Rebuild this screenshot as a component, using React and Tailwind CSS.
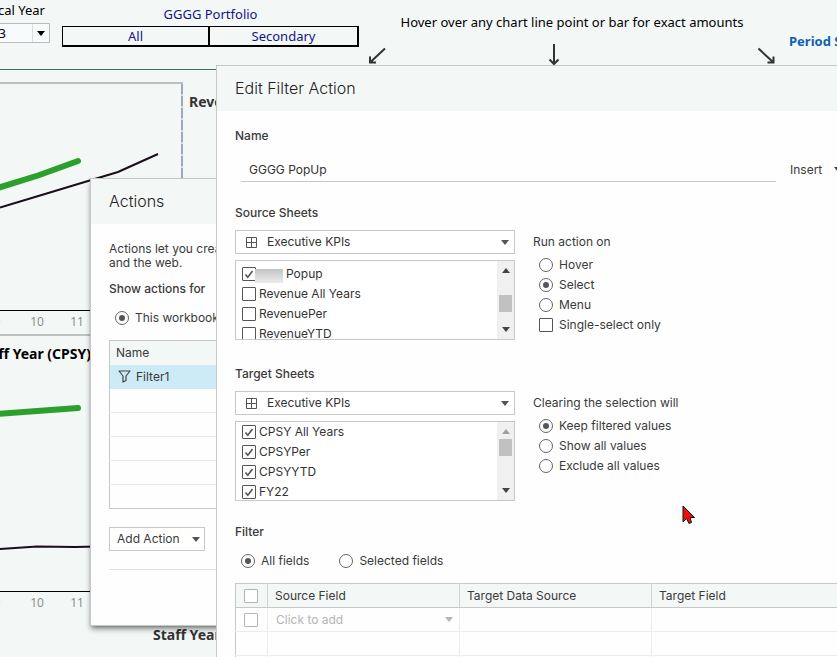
import React from "react";

const Caret = ({ className = "" }) => (
  <svg viewBox="0 0 8 5" className={"h-[5px] w-2 shrink-0 " + className} fill="currentColor" aria-hidden="true">
    <path d="M0 0h8L4 5z" />
  </svg>
);

const SheetIcon = () => (
  <svg viewBox="0 0 11 11" className="h-[11px] w-[11px]" fill="none" stroke="#555" aria-hidden="true">
    <path d="M.5.5h10v10H.5zM5.5.5v10M.5 5.5h10" />
  </svg>
);

function Radio({ label, name, checked }) {
  return (
    <label className="flex h-5 items-center gap-1.5 whitespace-nowrap">
      <input
        type="radio"
        name={name}
        defaultChecked={checked}
        className="grid h-3.5 w-3.5 shrink-0 appearance-none place-content-center rounded-full border border-[#666] bg-white before:h-1.5 before:w-1.5 before:rounded-full checked:before:bg-[#555]"
      />
      {label}
    </label>
  );
}

function Check({ label, checked, hidden, faint, gap = "gap-[3px]" }) {
  return (
    <label className={"flex h-5 items-center whitespace-nowrap " + gap}>
      <span className="relative block h-3.5 w-3.5 shrink-0">
        <input
          type="checkbox"
          defaultChecked={checked}
          aria-label={label || "Select row"}
          className={
            "peer block h-3.5 w-3.5 appearance-none rounded-[1px] border bg-white " +
            (faint ? "border-[#b4b4b4]" : "border-[#555]")
          }
        />
        <svg
          viewBox="0 0 14 14"
          className="pointer-events-none absolute inset-0 hidden h-3.5 w-3.5 peer-checked:block"
          fill="none"
          stroke="#555"
          strokeWidth="1.6"
          aria-hidden="true"
        >
          <path d="M3.5 7.5l2.3 2.8L10.5 4" />
        </svg>
      </span>
      {hidden && (
        <span className="-ml-1 h-3.5 w-7 translate-y-0.5 bg-linear-to-b from-[#c2c2c2] to-[#ededed]" />
      )}
      {label}
    </label>
  );
}

function SheetPicker({ id, title, items, offset, thumb, atTop }) {
  return (
    <section className="w-[280px] shrink-0">
      <label htmlFor={id} className="block h-5 leading-[22px] font-medium">
        {title}
      </label>
      <div className="relative mt-2">
        <select
          id={id}
          className="block h-6 w-full appearance-none border border-[#c8c8c8] bg-white pl-[31px] text-[#333]"
        >
          <option>Executive KPIs</option>
        </select>
        <span className="pointer-events-none absolute inset-0 flex items-center justify-between pl-[11px] pr-1.5">
          <SheetIcon />
          <Caret className="text-[#555]" />
        </span>
      </div>
      <div className="mt-1.5 flex h-20 overflow-hidden border border-[#c8c8c8] bg-white">
        <div className={"flex-1 pl-1.5 text-[#333] " + offset}>
          {items.map((item) => (
            <Check key={item.label} {...item} />
          ))}
        </div>
        <div className="flex w-[17px] flex-col items-center justify-between bg-[#f0f0f0] py-[7px]">
          <Caret className={"rotate-180 " + (atTop ? "text-[#a0a0a0]" : "text-[#444]")} />
          <div className={"flex w-[13px] flex-1 flex-col " + thumb}>
            <div className="h-[17px] bg-[#c1c1c1]" />
          </div>
          <Caret className="text-[#444]" />
        </div>
      </div>
    </section>
  );
}

function Axis() {
  return (
    <div className="-ml-[23px] flex h-6 border-t border-black text-center font-['Open_Sans','Noto_Sans',sans-serif] text-xs leading-[22px] text-[#888]">
      {[9, 10, 11, 12, 13].map((n) => (
        <span key={n} className="w-10 shrink-0">
          {n}
        </span>
      ))}
    </div>
  );
}

function Dashboard() {
  return (
    <div className="font-['Noto_Sans','Open_Sans',sans-serif]">
      <header className="flex h-[70px] border-b border-[#3b7254] whitespace-nowrap">
        <div className="flex w-[50px] shrink-0 flex-col items-end">
          <label htmlFor="year" className="pr-[5px] text-[13px] leading-5">
            Fiscal Year
          </label>
          <div className="relative mt-[3px]">
            <select
              id="year"
              className="block h-5 w-20 appearance-none border border-[#bbb] bg-[#f7fbfb] pl-5 text-[13px] leading-4"
            >
              <option>23</option>
            </select>
            <span className="pointer-events-none absolute inset-y-px right-px flex w-[17px] items-center justify-center border-l border-[#ddd]">
              <Caret />
            </span>
          </div>
        </div>
        <div className="ml-3 w-[297px] shrink-0 pt-1 text-center text-[13px] text-[#14148a]">
          <div className="h-[22px] leading-5">GGGG Portfolio</div>
          <div className="grid h-[21px] grid-cols-2 divide-x-2 divide-black border border-r-2 border-b-2 border-black">
            <button type="button" className="leading-[18px]">All</button>
            <button type="button" className="leading-[18px]">Secondary</button>
          </div>
        </div>
        <div className="ml-[9px] w-[408px] shrink-0 pt-3 text-center">
          <p className="text-[13px] leading-5">Hover over any chart line point or bar for exact amounts</p>
          <div className="mt-3 flex">
            <svg viewBox="0 0 18 22" className="h-[22px] w-[18px]" fill="none" stroke="#333" strokeWidth="2" aria-hidden="true">
              <path d="M17 4.500L2 18.500M2 12.500V18.500h6" />
            </svg>
            <svg viewBox="0 0 18 22" className="ml-[159px] h-[22px] w-[18px]" fill="none" stroke="#333" strokeWidth="2" aria-hidden="true">
              <path d="M9 0v20M4.500 15.500L9 20l4.500-4.500" />
            </svg>
            <svg viewBox="0 0 18 22" className="ml-[195px] h-[22px] w-[18px]" fill="none" stroke="#333" strokeWidth="2" aria-hidden="true">
              <path d="M.5 4.500L15.500 18.500M15.500 12.500V18.500h-6" />
            </svg>
          </div>
        </div>
        <a href="#period" className="ml-[13px] pt-[31px] text-[13px] leading-5 font-bold text-[#0b62b5]">
          Period S
        </a>
      </header>

      <div className="mt-3 flex">
        <div className="w-[183px] shrink-0">
          <div className="flex border-y-2 border-[#bdc1c0]">
            <div className="flex-1">
              <svg viewBox="0 84 180 226" className="block h-[226px] w-[180px]" fill="none" aria-hidden="true">
                <path d="M-4 188.500L38 175.500L78 161" stroke="#2ca02c" strokeWidth="6" strokeLinecap="round" />
                <path d="M0 207.500L40 195.500L88 181L118 172L158 154" stroke="#1c0c1c" strokeWidth="2" />
              </svg>
              <Axis />
            </div>
            <div className="w-0.5 bg-[repeating-linear-gradient(#9aaabf_0_10px,#d5dadb_10px_12px)]" />
          </div>
        </div>
        <h2 className="pt-2.5 pl-1.5 text-sm leading-5 font-bold text-[#333]">Revenue</h2>
      </div>

      <div>
        <h2 className="flex h-[35px] w-[91px] items-center justify-end text-sm font-bold whitespace-nowrap">
          Staff Year (CPSY)
        </h2>
        <svg viewBox="0 371 180 220" className="block h-[220px] w-[180px]" fill="none" aria-hidden="true">
          <path d="M-4 414L78 408" stroke="#2ca02c" strokeWidth="6" strokeLinecap="round" />
          <path d="M0 549L37 546.500L75 547L120 546" stroke="#1c0c1c" strokeWidth="2" />
        </svg>
        <div className="w-[180px]">
          <Axis />
        </div>
      </div>
      <h2 className="mt-2.5 pl-[153px] text-sm leading-5 font-bold text-[#333]">Staff Year</h2>
    </div>
  );
}

function ActionsDialog() {
  return (
    <section className="absolute top-[178px] left-[90px] w-[600px] border border-[#c4c8c8] bg-[#fefefe] pb-[55px] shadow-md shadow-black/40">
      <h2 className="h-[45px] bg-[#f3f7f6] pl-[18px] text-base leading-[44px] font-light text-[#222]">Actions</h2>
      <div className="pt-[18px] pl-[18px]">
        <p className="leading-[14px]">
          Actions let you create
          <br />
          and the web.
        </p>
        <h3 className="mt-[9px] h-5 leading-5 font-medium">Show actions for</h3>
        <div className="mt-[9px] pl-1.5">
          <Radio name="scope" label="This workbook" checked />
        </div>
        <table className="mt-3 w-full border-collapse border border-[#c8c8c8] text-left">
          <thead>
            <tr className="h-6 bg-[#f3f7f6]">
              <th className="pl-1.5 font-normal">Name</th>
            </tr>
          </thead>
          <tbody>
            <tr className="h-6 bg-[#cdeaf7]">
              <td className="pl-2">
                <span className="flex items-center gap-[5px]">
                  <svg viewBox="0 0 13 13" className="h-[13px] w-[13px]" fill="none" stroke="#444" strokeWidth="1.2" aria-hidden="true">
                    <path d="M1 1h11L8 6v4.500L5 12V6z" strokeLinejoin="round" />
                  </svg>
                  Filter1
                </span>
              </td>
            </tr>
            {[1, 2, 3, 4, 5].map((n) => (
              <tr key={n} className="h-6 border-b border-[#e8e8e8] last:border-[#c8c8c8]">
                <td />
              </tr>
            ))}
          </tbody>
        </table>
        <button type="button" className="mt-[18px] flex h-6 w-24 items-center justify-between border border-[#c8c8c8] bg-white pr-1 pl-[7px]">
          Add Action
          <Caret className="text-[#555]" />
        </button>
        <hr className="mt-[18px] border-[#dfe3e3]" />
      </div>
    </section>
  );
}

function EditDialog() {
  return (
    <section className="absolute top-[65px] right-0 bottom-0 left-[216px] overflow-hidden border-t border-l border-[#c4c8c8] bg-[#fefefe]">
      <h2 className="h-[45px] bg-[#f3f7f6] pl-[18px] text-base leading-[44px] font-light text-[#222]">Edit Filter Action</h2>
      <form className="pt-3.5 pl-[18px]">
        <label htmlFor="name" className="block h-5 leading-[22px] font-medium">
          Name
        </label>
        <div className="mt-3 flex pl-1.5">
          <input
            id="name"
            defaultValue="GGGG PopUp"
            className="h-[25px] min-w-0 flex-1 border-b border-[#c8c8c8] bg-transparent px-2 text-[#333] outline-none"
          />
          <button type="button" className="flex w-[61px] shrink-0 items-center gap-3 overflow-hidden pl-[14px]">
            Insert
            <Caret />
          </button>
        </div>

        <div className="mt-5 flex gap-[18px]">
          <SheetPicker
            id="source"
            title="Source Sheets"
            offset="pt-[3px]"
            thumb="pt-[22px]"
            items={[
              { label: "Popup", checked: true, hidden: true },
              { label: "Revenue All Years" },
              { label: "RevenuePer" },
              { label: "RevenueYTD" },
            ]}
          />
          <fieldset className="pt-[30px]">
            <legend className="float-left h-5 leading-5">Run action on</legend>
            <div className="clear-both pt-[3px] pl-1.5">
              <Radio name="run" label="Hover" />
              <Radio name="run" label="Select" checked />
              <Radio name="run" label="Menu" />
              <Check label="Single-select only" gap="gap-1.5" />
            </div>
          </fieldset>
        </div>

        <div className="mt-[23px] flex gap-[18px]">
          <SheetPicker
            id="target"
            title="Target Sheets"
            offset="pt-0"
            thumb="pt-[5px]"
            atTop
            items={[
              { label: "CPSY All Years", checked: true },
              { label: "CPSYPer", checked: true },
              { label: "CPSYYTD", checked: true },
              { label: "FY22", checked: true },
            ]}
          />
          <fieldset className="pt-[30px]">
            <legend className="float-left h-5 leading-5">Clearing the selection will</legend>
            <div className="clear-both pt-[3px] pl-1.5">
              <Radio name="clear" label="Keep filtered values" checked />
              <Radio name="clear" label="Show all values" />
              <Radio name="clear" label="Exclude all values" />
            </div>
          </fieldset>
        </div>

        <h3 className="mt-5 h-5 leading-[22px] font-medium">Filter</h3>
        <div className="mt-2.5 flex gap-[30px] pl-1.5">
          <Radio name="fields" label="All fields" checked />
          <Radio name="fields" label="Selected fields" />
        </div>

        <table className="mt-3 w-full table-fixed border-collapse border border-r-0 border-[#c8c8c8] text-left">
          <thead>
            <tr className="h-6 border-b border-[#c8c8c8] bg-[#f3f7f6]">
              <th className="w-8 border-r border-[#d0d4d4] pl-2">
                <Check faint />
              </th>
              <th className="w-48 border-r border-[#d0d4d4] pl-[7px] font-normal">Source Field</th>
              <th className="w-48 border-r border-[#d0d4d4] pl-[7px] font-normal">Target Data Source</th>
              <th className="pl-[7px] font-normal">Target Field</th>
            </tr>
          </thead>
          <tbody>
            <tr className="h-6 border-b border-[#ececec]">
              <td className="border-r border-[#ececec] pl-2">
                <Check faint />
              </td>
              <td className="border-r border-[#ececec] pr-1.5 pl-2 text-[#b4b4b4]">
                <span className="flex items-center justify-between">
                  Click to add
                  <Caret />
                </span>
              </td>
              <td className="border-r border-[#ececec]" />
              <td />
            </tr>
            {[1, 2].map((n) => (
              <tr key={n} className="h-6 border-b border-[#ececec]">
                <td className="border-r border-[#ececec]" />
                <td className="border-r border-[#ececec]" />
                <td className="border-r border-[#ececec]" />
                <td />
              </tr>
            ))}
          </tbody>
        </table>
      </form>
    </section>
  );
}

export default function App() {
  return (
    <main className="relative h-screen overflow-hidden bg-[#f3f7f6] text-black">
      <Dashboard />
      <div className="font-[Inter,'Liberation_Sans',sans-serif] text-xs text-[#3a3a3a]">
        <ActionsDialog />
        <EditDialog />
      </div>
      <svg viewBox="0 0 14 20" className="absolute top-[505px] left-[682px] h-5 w-3.5" fill="#f01008" stroke="#111" aria-hidden="true">
        <path d="M1 1v16l3.500-3.500L7 18.500l2.500-1L8 12.500h4.500z" />
      </svg>
    </main>
  );
}
